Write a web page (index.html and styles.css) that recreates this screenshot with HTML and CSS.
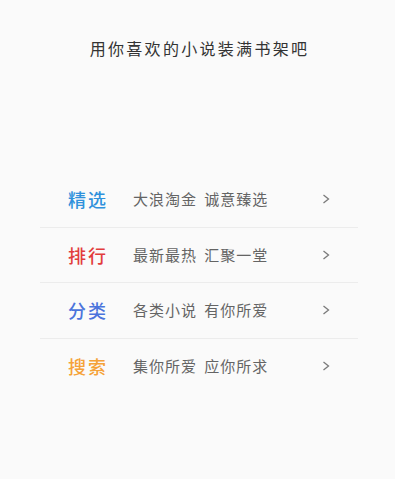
FILE: index.html
```html
<!DOCTYPE html>
<html lang="zh-CN">
<head>
<meta charset="utf-8">
<title>书架</title>
<link rel="stylesheet" href="styles.css">
</head>
<body>
<div class="page">
  <h1 class="title">用你喜欢的小说装满书架吧</h1>
  <ul class="menu">
    <li class="row">
      <span class="label blue">精选</span>
      <span class="desc">大浪淘金 诚意臻选</span>
      <svg class="chev" width="8" height="10" viewBox="0 0 8 10"><polyline points="1.5,1 6.5,5 1.5,9" fill="none" stroke="#7a7a7a" stroke-width="1.3"/></svg>
    </li>
    <li class="row">
      <span class="label red">排行</span>
      <span class="desc">最新最热 汇聚一堂</span>
      <svg class="chev" width="8" height="10" viewBox="0 0 8 10"><polyline points="1.5,1 6.5,5 1.5,9" fill="none" stroke="#7a7a7a" stroke-width="1.3"/></svg>
    </li>
    <li class="row">
      <span class="label indigo">分类</span>
      <span class="desc">各类小说 有你所爱</span>
      <svg class="chev" width="8" height="10" viewBox="0 0 8 10"><polyline points="1.5,1 6.5,5 1.5,9" fill="none" stroke="#7a7a7a" stroke-width="1.3"/></svg>
    </li>
    <li class="row last">
      <span class="label orange">搜索</span>
      <span class="desc">集你所爱 应你所求</span>
      <svg class="chev" width="8" height="10" viewBox="0 0 8 10"><polyline points="1.5,1 6.5,5 1.5,9" fill="none" stroke="#7a7a7a" stroke-width="1.3"/></svg>
    </li>
  </ul>
</div>
</body>
</html>
```

FILE: styles.css
```css
html, body {
  margin: 0;
  padding: 0;
  background: #fafafa;
}
body {
  font-family: "Noto Sans CJK SC", "Noto Sans", sans-serif;
  width: 395px;
  height: 479px;
  overflow: hidden;
}
.page {
  display: flex;
  flex-direction: column;
}
.title {
  margin: 0;
  padding-top: 36px;
  font-size: 16px;
  line-height: 24px;
  font-weight: normal;
  color: #333;
  letter-spacing: 2.3px;
  text-align: center;
  padding-left: 4px;
}
.menu {
  list-style: none;
  margin: 112px 37px 0 40px;
  padding: 0;
}
.row {
  display: flex;
  align-items: center;
  height: 54.5px;
  border-bottom: 1px solid #ececec;
  padding: 0 28px 0 28px;
}
.row.last {
  border-bottom: none;
}
.label {
  width: 65px;
  font-size: 18px;
  font-weight: 500;
  letter-spacing: 2px;
  line-height: 24px;
}
.blue { color: #2f91dc; }
.red { color: #e23c3c; }
.indigo { color: #4b74dc; }
.orange { color: #f5a238; }
.desc {
  flex: 1;
  font-size: 15px;
  letter-spacing: 1px;
  word-spacing: 3px;
  color: #646464;
  line-height: 20px;
}
.chev {
  display: block;
}
```
